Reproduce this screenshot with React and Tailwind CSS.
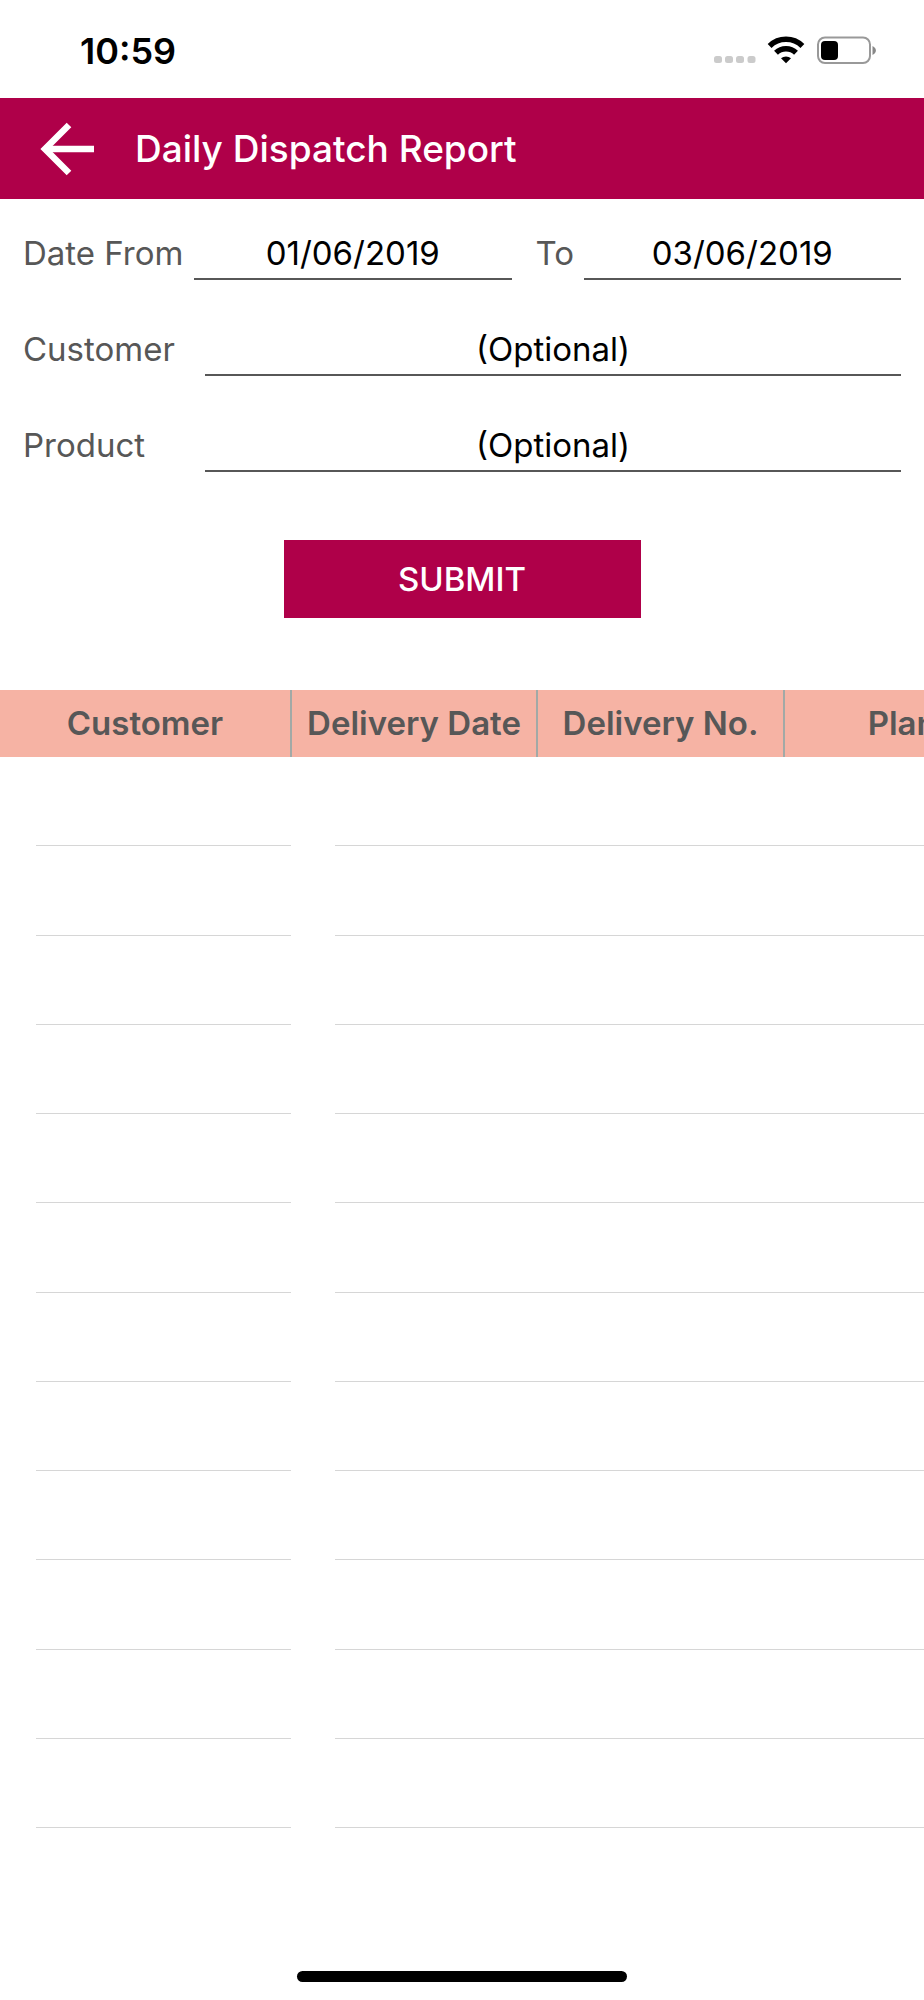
import React, { useState } from 'react';

const rows = Array.from({ length: 12 }, (_, i) => i);

const StatusBar = () => {
    return (
        <div className='h-[98px] shrink-0 flex items-center justify-between pl-20 pr-12 pt-1'>
            <span className='text-[36px] leading-10 font-semibold'>10:59</span>
            <svg width="162" height="30" viewBox="0 0 162 30" aria-hidden="true">
                <g fill="#cbcbcb">
                    <rect x="0" y="20" width="8" height="7" rx="2.500" />
                    <rect x="11" y="20" width="8" height="7" rx="2.500" />
                    <rect x="22" y="20" width="8" height="7" rx="2.500" />
                    <rect x="33.500" y="20" width="8" height="7" rx="2.500" />
                </g>
                <g fill="none" stroke="#000" strokeWidth="5.500">
                    <path d="M55.600 10 A23.500 23.500 0 0 1 88.400 10" />
                    <path d="M62 16.800 A14.300 14.300 0 0 1 82 16.800" />
                </g>
                <path d="M72 27.300 L67 22.300 A7.500 7.500 0 0 1 77 22.300 Z" fill="#000" />
                <rect x="104" y="1.500" width="52" height="25.500" rx="7" fill="none" stroke="#999" strokeWidth="2" />
                <rect x="107" y="5" width="17" height="19" rx="4" fill="#000" />
                <path d="M158.500 10 C163 12 163 17 158.500 19 Z" fill="#888" />
            </svg>
        </div>
    )
}

const Header = () => {
    return (
        <header className='h-[101px] shrink-0 bg-[#af0049] flex items-center gap-10 pl-10 pt-px'>
            <button type="button" aria-label="Back">
                <svg width="55" height="54" viewBox="0 0 55 54" fill="none" stroke="#fff" strokeWidth="6.500">
                    <path d="M29 3 L5 27 L29 51" />
                    <path d="M4 27 H54" />
                </svg>
            </button>
            <h1 className='text-white text-[37px] leading-10 font-medium'>Daily Dispatch Report</h1>
        </header>
    )
}

const App = () => {
    const [dateFrom, setDateFrom] = useState('01/06/2019');
    const [dateTo, setDateTo] = useState('03/06/2019');
    const [customer, setCustomer] = useState('');
    const [product, setProduct] = useState('');

    const inputStyle = 'h-12 flex-1 min-w-0 bg-transparent text-center text-black placeholder:text-black border-b-2 border-[#575757] pb-1 outline-none';

    return (
        <div className="min-h-screen flex flex-col bg-white text-black font-['Inter','Liberation_Sans',sans-serif]">
            <StatusBar />
            <Header />

            <form className='shrink-0 px-[23px] pt-[33px] flex flex-col gap-12 text-[33px] leading-[42px] text-[#575757]' onSubmit={(e) => e.preventDefault()}>
                <div className='flex'>
                    <label htmlFor="from" className='w-[171px]'>Date From</label>
                    <input id="from" className={inputStyle} value={dateFrom} onChange={(e) => setDateFrom(e.target.value)} />
                    <label htmlFor="to" className='w-[72px] pl-6'>To</label>
                    <input id="to" className={inputStyle} value={dateTo} onChange={(e) => setDateTo(e.target.value)} />
                </div>
                <div className='flex'>
                    <label htmlFor="customer" className='w-[182px]'>Customer</label>
                    <input id="customer" className={inputStyle} placeholder="(Optional)" value={customer} onChange={(e) => setCustomer(e.target.value)} />
                </div>
                <div className='flex'>
                    <label htmlFor="product" className='w-[182px]'>Product</label>
                    <input id="product" className={inputStyle} placeholder="(Optional)" value={product} onChange={(e) => setProduct(e.target.value)} />
                </div>
                <button type="submit" className='mt-5 h-[78px] w-[357px] self-center bg-[#af0049] text-white font-medium'>SUBMIT</button>
            </form>

            <div className='mt-[72px] flex-1 flex overflow-x-auto [scrollbar-width:none]'>
                <table className='w-[1031px] shrink-0 table-fixed border-collapse'>
                    <thead>
                        <tr className='h-[67px] bg-[#f6b3a4] text-[33px] text-[#575757]'>
                            <th className='w-[291px] p-0 font-semibold border-r-2 border-[#a2a9a6]'>Customer</th>
                            <th className='w-[246px] p-0 font-semibold whitespace-nowrap border-r-2 border-[#a2a9a6]'>Delivery Date</th>
                            <th className='w-[247px] p-0 font-semibold whitespace-nowrap border-r-2 border-[#a2a9a6]'>Delivery No.</th>
                            <th className='p-0 font-semibold'>Plant</th>
                        </tr>
                    </thead>
                    <tbody>
                        {rows.map((row) => (
                            <tr key={row}>
                                <td className='p-0 pl-9 align-bottom'>
                                    <div className='border-b border-[#d6d6d6]'></div>
                                </td>
                                <td colSpan={3} className='p-0 pl-11 align-bottom'>
                                    <div className='border-b border-[#d6d6d6]'></div>
                                </td>
                            </tr>
                        ))}
                    </tbody>
                </table>
            </div>

            {/* home indicator */}
            <div className='h-[172px] shrink-0 flex items-end justify-center pb-[18px]'>
                <div className='w-[330px] h-[11px] rounded-full bg-black'></div>
            </div>
        </div>
    )
}

export default App
